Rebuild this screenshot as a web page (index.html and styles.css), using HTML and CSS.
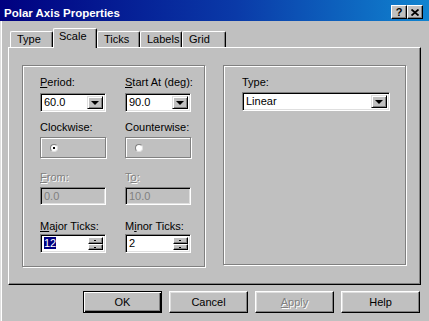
FILE: index.html
```html
<!DOCTYPE html>
<html lang="en">
<head>
<meta charset="utf-8">
<title>Polar Axis Properties</title>
<link rel="stylesheet" href="styles.css">
</head>
<body>
<div class="window">
    <div class="titlebar">
        <span class="title">Polar Axis Properties</span>
        <span class="tb-btn">?</span>
        <span class="tb-btn">
            <svg width="8" height="7" viewBox="0 0 8 7"><path d="M0.5 0.5 L7.5 6.5 M7.5 0.5 L0.5 6.5" stroke="#000" stroke-width="1.8"/></svg>
        </span>
    </div>
    <div class="client">
        <div class="tabs">
            <div class="tab t-type">Type</div>
            <div class="tab t-scale active">Scale</div>
            <div class="tab t-ticks">Ticks</div>
            <div class="tab t-labels">Labels</div>
            <div class="tab t-grid">Grid</div>
        </div>
        <div class="panel">
            <div class="group left-group">
                <div class="row row-period">
                    <div class="field">
                        <div class="lbl"><u>P</u>eriod:</div>
                        <div class="combo"><span class="val">60.0</span><span class="drop"><i class="arrow"></i></span></div>
                    </div>
                    <div class="field">
                        <div class="lbl"><u>S</u>tart At (deg):</div>
                        <div class="combo"><span class="val">90.0</span><span class="drop"><i class="arrow"></i></span></div>
                    </div>
                </div>
                <div class="row row-dir">
                    <div class="field">
                        <div class="lbl">Clockwise:</div>
                        <div class="radiobox"><span class="radio checked"></span></div>
                    </div>
                    <div class="field">
                        <div class="lbl">Counterwise:</div>
                        <div class="radiobox"><span class="radio"></span></div>
                    </div>
                </div>
                <div class="row row-range">
                    <div class="field">
                        <div class="lbl disabled"><u>F</u>rom:</div>
                        <div class="input off"><span class="val">0.0</span></div>
                    </div>
                    <div class="field">
                        <div class="lbl disabled">T<u>o</u>:</div>
                        <div class="input off"><span class="val">10.0</span></div>
                    </div>
                </div>
                <div class="row row-ticks">
                    <div class="field">
                        <div class="lbl"><u>M</u>ajor Ticks:</div>
                        <div class="spin"><span class="val"><span class="sel">12</span></span><span class="spin-btns"><span class="sb"></span><span class="sb"></span></span></div>
                    </div>
                    <div class="field">
                        <div class="lbl">M<u>i</u>nor Ticks:</div>
                        <div class="spin"><span class="val">2</span><span class="spin-btns"><span class="sb"></span><span class="sb"></span></span></div>
                    </div>
                </div>
            </div>
            <div class="group right-group">
                <div class="lbl">Type:</div>
                <div class="combo wide"><span class="val">Linear</span><span class="drop"><i class="arrow"></i></span></div>
            </div>
        </div>
        <div class="buttons">
            <div class="btn default">OK</div>
            <div class="btn">Cancel</div>
            <div class="btn disabled"><u>A</u>pply</div>
            <div class="btn">Help</div>
        </div>
    </div>
</div>
</body>
</html>
```

FILE: styles.css
```css
* {
    box-sizing: border-box;
}
body {
    margin: 0;
    background-color: #c0c0c0;
}
.window {
    width: 429px;
    height: 321px;
    overflow: hidden;
    background-color: #c0c0c0;
    font-family: "Liberation Sans", Arial, sans-serif;
    font-size: 11px;
    color: #000;
}
.titlebar {
    height: 21px;
    display: flex;
    align-items: flex-start;
    padding: 5px 6px 0 4px;
    background: linear-gradient(90deg, #000080 0%, #0a3aa8 55%, #1084d0 100%);
}
.title {
    flex: 1;
    color: #fff;
    font-weight: 700;
    font-size: 11.5px;
    line-height: 14px;
    padding-top: 1px;
}
.tb-btn {
    width: 16px;
    height: 14px;
    display: flex;
    align-items: center;
    justify-content: center;
    background-color: #c0c0c0;
    border: 1px solid;
    border-color: #fff #000 #000 #fff;
    box-shadow: inset -1px -1px #808080;
    font-weight: 700;
    font-size: 11px;
    line-height: 11px;
}
.client {
    height: 300px;
    padding-top: 7px;
    box-shadow: inset 1px 0 #dfdfdf, inset 2px 0 #fff;
}
.tabs {
    display: flex;
    align-items: flex-end;
    height: 20px;
    margin-left: 10px;
    margin-bottom: -1px;
    position: relative;
    z-index: 1;
}
.tab {
    height: 16px;
    margin-bottom: 1px;
    padding: 1px 0 0 6px;
    line-height: 13px;
    background-color: #c0c0c0;
    border-top: 1px solid #fff;
    border-left: 1px solid #fff;
    border-right: 1px solid #000;
    border-radius: 2px 2px 0 0;
    box-shadow: inset -1px 0 #808080;
}
.t-type { width: 43px; }
.t-scale { width: 44px; }
.t-ticks { width: 43px; }
.t-labels { width: 42px; }
.t-grid { width: 44px; }
.tab.active {
    height: 20px;
    margin-bottom: 0;
    padding-top: 1px;
    padding-left: 5px;
}
.panel {
    margin-left: 8px;
    width: 413px;
    height: 238px;
    display: flex;
    align-items: flex-start;
    gap: 18px;
    padding: 17px 0 0 13px;
    border: 1px solid;
    border-color: #fff #000 #000 #fff;
    box-shadow: inset -1px -1px #808080;
}
.group {
    width: 183px;
    border: 1px solid #808080;
    box-shadow: inset 1px 1px #fff, 1px 1px #fff;
}
.left-group {
    height: 202px;
    padding: 9px 0 0 17px;
}
.right-group {
    height: 200px;
    padding: 9px 0 0 18px;
}
.row {
    display: flex;
    gap: 19px;
}
.field {
    width: 66px;
}
.lbl {
    height: 14px;
    line-height: 14px;
    white-space: nowrap;
}
.disabled {
    color: #808080;
    text-shadow: 1px 1px #fff;
}
.row-dir { margin-top: 8px; }
.row-range { margin-top: 12px; }
.row-ticks { margin-top: 14px; }
.row-period .lbl { margin-bottom: 4px; }
.row-dir .lbl { margin-bottom: 3px; }
.row-range .lbl { margin-bottom: 3px; }
.row-ticks .lbl { margin-bottom: 1px; }
.right-group .lbl { margin-bottom: 3px; }

/* sunken fields */
.combo, .input, .spin {
    display: flex;
    background-color: #fff;
    border: 1px solid;
    border-color: #808080 #fff #fff #808080;
    box-shadow: inset 1px 1px #000, inset -1px -1px #dfdfdf;
    padding: 2px 2px 2px 2px;
}
.combo, .spin {
    height: 19px;
}
.combo.wide {
    width: 148px;
}
.input {
    height: 18px;
}
.input.off {
    background-color: #c0c0c0;
    color: #808080;
}
.val {
    flex: 1;
    line-height: 13px;
    padding-left: 1px;
}
.sel {
    background-color: #000080;
    color: #fff;
}
.drop {
    width: 16px;
    display: flex;
    align-items: center;
    justify-content: center;
    background-color: #c0c0c0;
    border: 1px solid;
    border-color: #dfdfdf #000 #000 #dfdfdf;
    box-shadow: inset 1px 1px #fff, inset -1px -1px #808080;
}
.arrow {
    width: 0;
    height: 0;
    border-left: 4px solid transparent;
    border-right: 4px solid transparent;
    border-top: 4px solid #000;
}
.spin-btns {
    width: 15px;
    display: flex;
    flex-direction: column;
}
.sb {
    flex: 1;
    background-color: #c0c0c0;
    border: 1px solid;
    border-color: #fff #000 #000 #fff;
    box-shadow: inset -1px -1px #808080;
    position: relative;
}
.sb::after {
    content: "";
    position: absolute;
    left: 5px;
    top: 2px;
    width: 2px;
    height: 1px;
    background-color: #000;
}

/* radio frame */
.radiobox {
    height: 21px;
    display: flex;
    align-items: center;
    padding-left: 9px;
    border: 1px solid #808080;
    box-shadow: inset 1px 1px #fff, 1px 1px #fff;
}
.radio {
    width: 8px;
    height: 8px;
    border-radius: 50%;
    background-color: #fff;
    border: 1px solid;
    border-color: #808080 #dfdfdf #dfdfdf #808080;
    display: flex;
    align-items: center;
    justify-content: center;
}
.radio.checked::after {
    content: "";
    width: 2px;
    height: 2px;
    background-color: #000;
}

/* bottom buttons */
.buttons {
    display: flex;
    gap: 7px;
    margin-top: 6px;
    padding-left: 83px;
}
.btn {
    width: 79px;
    height: 22px;
    display: flex;
    align-items: center;
    justify-content: center;
    background-color: #c0c0c0;
    border: 1px solid;
    border-color: #fff #000 #000 #fff;
    box-shadow: inset -1px -1px #808080, inset 1px 1px #dfdfdf;
}
.btn.default {
    border-color: #000;
    box-shadow: inset 1px 1px #fff, inset -1px -1px #000, inset -2px -2px #808080;
}
```
